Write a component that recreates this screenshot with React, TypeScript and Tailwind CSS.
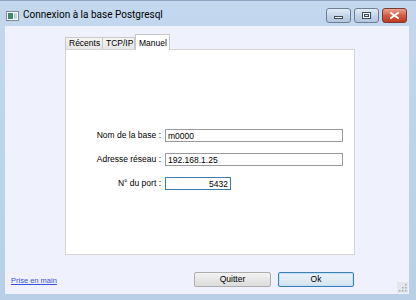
import React from "react";

const tabs = [
  { label: "Récents", w: "w-[38px]", active: false },
  { label: "TCP/IP", w: "w-[33px]", active: false },
  { label: "Manuel", w: "w-[35px]", active: true },
];

const fields = [
  { label: "Nom de la base :", value: "m0000", w: "w-[178px]", focus: false },
  { label: "Adresse réseau :", value: "192.168.1.25", w: "w-[178px]", focus: false },
  { label: "N° du port :", value: "5432", w: "w-[66px]", focus: true },
];

const WindowButton: React.FC<{ kind: "min" | "max" | "close" }> = ({ kind }) => {
  const base =
    "w-[25px] h-[15px] rounded-[3px] border flex items-center justify-center";
  if (kind === "close") {
    return (
      <div className={`${base} border-[#7a3a30] bg-gradient-to-b from-[#e8a493] via-[#d25a43] to-[#c03a22]`}>
        <svg width="9" height="7" viewBox="0 0 9 7">
          <path d="M1 1 L8 6 M8 1 L1 6" stroke="#ffffff" strokeWidth="2" strokeLinecap="square" />
        </svg>
      </div>
    );
  }
  return (
    <div className={`${base} border-[#6d7f95] bg-gradient-to-b from-[#e3ecf6] via-[#c5d5e8] to-[#b3c6de]`}>
      {kind === "min" ? (
        <div className="w-[9px] h-[3px] mt-[4px] bg-white border border-[#3d4a5a]" />
      ) : (
        <div className="w-[9px] h-[7px] bg-white border border-[#3d4a5a] p-[1px]">
          <div className="w-full h-full border border-[#3d4a5a] bg-[#dce6f2]" />
        </div>
      )}
    </div>
  );
};

const App: React.FC = () => {
  return (
    <div
      className="w-[416px] h-[300px] flex flex-col bg-gradient-to-b from-[#c3d8ee] to-[#b8cfe8] border-t border-[#8fa6c2]"
      style={{ fontFamily: '"Liberation Sans", Arial, sans-serif' }}
    >
      {/* Title bar */}
      <div className="h-[25px] flex items-start pl-[6px] pr-[9px] shrink-0">
        <div className="mt-[10px] w-[13px] h-[10px] border border-[#7b8a98] bg-white p-[1px] flex gap-[1px]">
          <div className="w-[5px] h-full bg-[#3a8b6a]" />
          <div className="flex-1 bg-[#c9d3dc]" />
        </div>
        <span
          className="ml-[4px] mt-[8px] text-[10px] leading-[12px] text-black"
          style={{ fontFamily: "Roboto, sans-serif" }}
        >
          Connexion à la base Postgresql
        </span>
        <div className="ml-auto mt-[7px] flex gap-[3px]">
          <WindowButton kind="min" />
          <WindowButton kind="max" />
          <WindowButton kind="close" />
        </div>
      </div>

      {/* Client area */}
      <div className="relative flex-1 ml-[5px] mr-[7px] mb-[6px] bg-[#eff2fc] flex flex-col">
        {/* Tabs */}
        <div className="pl-[60px] pt-[8px] flex items-end h-[23px] text-[8.5px] text-black">
          {tabs.map((t) =>
            t.active ? (
              <div
                key={t.label}
                className={`${t.w} h-[16px] -mb-[1px] relative z-10 bg-white border border-b-0 border-[#c9c9c9] pl-[3px] pt-[2px]`}
              >
                {t.label}
              </div>
            ) : (
              <div
                key={t.label}
                className={`${t.w} h-[12px] bg-gradient-to-b from-[#f4f4f4] to-[#e6e6e6] border border-b-0 border-[#c9c9c9] -ml-[1px] first:ml-0 pl-[3px] leading-[11px]`}
              >
                {t.label}
              </div>
            )
          )}
        </div>

        {/* Tab page */}
        <div className="ml-[60px] w-[290px] h-[206px] bg-white border border-[#d4d4d4] pt-[79px] flex flex-col gap-[11px] text-[8.5px] text-black">
          {fields.map((f) => (
            <div key={f.label} className="flex items-center">
              <span className="w-[95px] text-right">{f.label}</span>
              <input
                readOnly
                value={f.value}
                className={`ml-[4px] ${f.w} h-[13px] px-[2px] bg-white outline-none ${
                  f.focus
                    ? "border border-[#3d7bad] text-right"
                    : "border border-[#9a9a9a]"
                }`}
              />
            </div>
          ))}
        </div>

        {/* Bottom row */}
        <div className="flex items-center mt-[17px] pl-[6px] pr-[55px]">
          <span className="text-[7.5px] text-[#3a4fe0] underline mt-[3px]">
            Prise en main
          </span>
          <div className="ml-auto flex gap-[7px] text-[8.5px] text-black">
            <button className="w-[77px] h-[15px] rounded-[2px] border border-[#adadad] bg-gradient-to-b from-[#f2f2f2] to-[#dcdcdc]">
              Quitter
            </button>
            <button className="w-[76px] h-[15px] rounded-[2px] border border-[#3c7fb1] bg-gradient-to-b from-[#eaf3fb] to-[#d6e3ef] shadow-[inset_0_0_0_1px_#bfe0f7]">
              Ok
            </button>
          </div>
        </div>

        {/* Size grip */}
        <div className="absolute right-[1px] bottom-[1px] w-[11px] h-[11px] bg-[#e4e6ec] flex items-end justify-end p-[1px]">
          <svg width="9" height="9" viewBox="0 0 9 9">
            {[
              [7, 1],
              [7, 4],
              [4, 4],
              [7, 7],
              [4, 7],
              [1, 7],
            ].map(([x, y]) => (
              <rect key={`${x}-${y}`} x={x} y={y} width="1.5" height="1.5" fill="#a3a7ae" />
            ))}
          </svg>
        </div>
      </div>
    </div>
  );
};

export default App;
